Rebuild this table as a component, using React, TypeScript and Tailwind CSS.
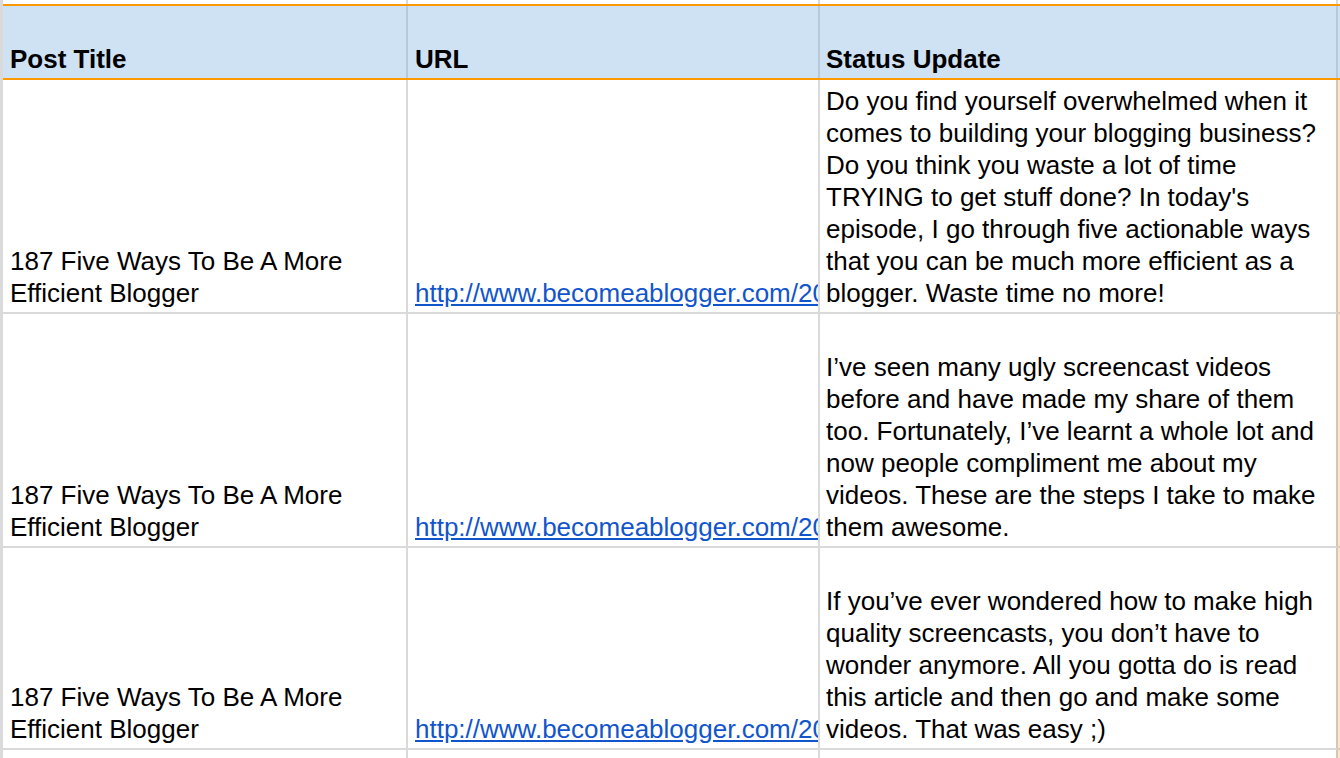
import React from 'react';

type Row = {
  title: string;
  url: string;
  status: string;
  height: string;
};

const rows: Row[] = [
  {
    title: '187 Five Ways To Be A More Efficient Blogger',
    url: 'http://www.becomeablogger.com/2016/05/five-ways-to-be-a-more-efficient-blogger/',
    status:
      "Do you find yourself overwhelmed when it comes to building your blogging business? Do you think you waste a lot of time TRYING to get stuff done? In today's episode, I go through five actionable ways that you can be much more efficient as a blogger. Waste time no more!",
    height: 'h-[234px]',
  },
  {
    title: '187 Five Ways To Be A More Efficient Blogger',
    url: 'http://www.becomeablogger.com/2016/05/five-ways-to-be-a-more-efficient-blogger/',
    status:
      'I\u2019ve seen many ugly screencast videos before and have made my share of them too. Fortunately, I\u2019ve learnt a whole lot and now people compliment me about my videos. These are the steps I take to make them awesome.',
    height: 'h-[234px]',
  },
  {
    title: '187 Five Ways To Be A More Efficient Blogger',
    url: 'http://www.becomeablogger.com/2016/05/five-ways-to-be-a-more-efficient-blogger/',
    status:
      'If you\u2019ve ever wondered how to make high quality screencasts, you don\u2019t have to wonder anymore. All you gotta do is read this article and then go and make some videos. That was easy ;)',
    height: 'h-[202px]',
  },
];

const cell = 'flex flex-col justify-end overflow-hidden pb-[3px]';

export default function App() {
  return (
    <div className="w-[1340px] h-[758px] overflow-hidden bg-white text-black font-['Liberation_Sans',Arial,sans-serif] text-[26px] leading-[32px]">
      <div className="border-l-[3px] border-[#dadada] h-full flex flex-col">
        {/* strip above the header */}
        <div className="flex h-[4px] shrink-0">
          <div className="w-[405px] border-r-2 border-[#dadada]" />
          <div className="w-[412px] border-r-2 border-[#dadada]" />
          <div className="w-[518px] border-r-2 border-[#dadada]" />
          <div className="flex-1" />
        </div>

        {/* header */}
        <div className="flex h-[76px] shrink-0 bg-[#cfe2f3] border-y-2 border-[#ff9900] font-bold">
          <div className={`${cell} w-[405px] border-r-2 border-[#b9c8d6] px-[7px]`}>Post Title</div>
          <div className={`${cell} w-[412px] border-r-2 border-[#b9c8d6] px-[7px]`}>URL</div>
          <div className={`${cell} w-[518px] border-r-2 border-[#b9c8d6] pl-[6px]`}>Status Update</div>
          <div className="flex-1" />
        </div>

        {rows.map((r, i) => (
          <div key={i} className={`flex shrink-0 ${r.height}`}>
            <div className={`${cell} w-[405px] border-r-2 border-b-2 border-[#dadada] px-[7px]`}>
              {r.title}
            </div>
            <div className={`${cell} w-[412px] border-r-2 border-b-2 border-[#dadada] pl-[7px]`}>
              <a href="#" className="text-[#1155cc] underline whitespace-nowrap">
                {r.url}
              </a>
            </div>
            <div className={`${cell} w-[518px] border-r-2 border-b-2 border-r-[#d8c6b3] border-b-[#dadada] pl-[6px] pr-[3px]`}>
              {r.status}
            </div>
            <div className="flex-1 bg-[#fce5cd] border-b-2 border-[#ddcbb8]" />
          </div>
        ))}

        {/* next row, cut off */}
        <div className="flex flex-1">
          <div className="w-[405px] border-r-2 border-[#dadada]" />
          <div className="w-[412px] border-r-2 border-[#dadada]" />
          <div className="w-[518px] border-r-2 border-[#d8c6b3]" />
          <div className="flex-1 bg-[#fce5cd]" />
        </div>
      </div>
    </div>
  );
}
